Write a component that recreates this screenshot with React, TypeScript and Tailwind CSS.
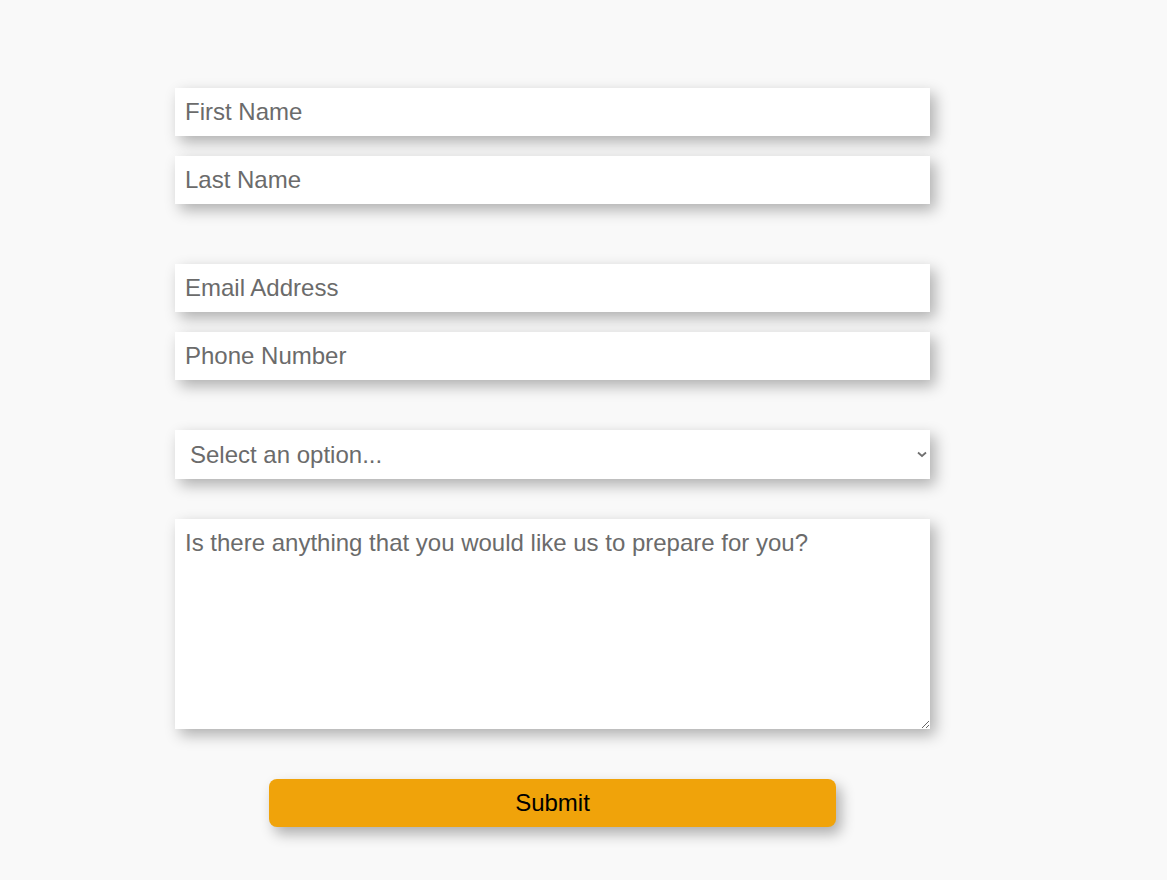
import React from 'react'

const field =
  'block w-full h-12 bg-white px-[10px] text-[24px] text-[#6b6b6b] placeholder:text-[#6b6b6b] outline-none shadow-[5px_6px_14px_rgba(0,0,0,0.3)]'

export default function App() {
  return (
    <div
      className="min-h-[880px] w-full bg-[#f9f9f9] pt-[88px]"
      style={{ fontFamily: '"Liberation Sans", Arial, sans-serif' }}
    >
      <form className="ml-[175px] w-[755px]" onSubmit={(e) => e.preventDefault()}>
        <div className="flex flex-col gap-5">
          <input className={field} placeholder="First Name" />
          <input className={field} placeholder="Last Name" />
        </div>

        <div className="mt-[60px] flex flex-col gap-5">
          <input className={field} placeholder="Email Address" />
          <input className={field} placeholder="Phone Number" />
        </div>

        <div className="relative mt-[50px]">
          <select
            defaultValue=""
            className="block h-[49px] w-full appearance-none bg-white pl-[15px] pr-8 text-[24px] text-[#6b6b6b] outline-none shadow-[5px_6px_14px_rgba(0,0,0,0.3)]"
          >
            <option value="" disabled>
              Select an option...
            </option>
            <option>Option 1</option>
            <option>Option 2</option>
          </select>
          <svg
            className="pointer-events-none absolute right-[3px] top-[21px]"
            width="10"
            height="7"
            viewBox="0 0 10 7"
            fill="none"
          >
            <path d="M1 1.5 L5 5 L9 1.5" stroke="#707070" strokeWidth="1.8" />
          </svg>
        </div>

        <textarea
          className="mt-10 block h-[210px] w-full bg-white px-[10px] py-[10px] text-[24px] leading-[28px] text-[#6b6b6b] placeholder:text-[#6b6b6b] outline-none shadow-[5px_6px_14px_rgba(0,0,0,0.3)]"
          placeholder="Is there anything that you would like us to prepare for you?"
        />

        <div className="mt-[50px] flex justify-center">
          <button
            type="submit"
            className="h-12 w-[567px] rounded-lg bg-[#f0a30a] text-[24px] text-black shadow-[5px_7px_14px_rgba(0,0,0,0.3)]"
          >
            Submit
          </button>
        </div>
      </form>
    </div>
  )
}
